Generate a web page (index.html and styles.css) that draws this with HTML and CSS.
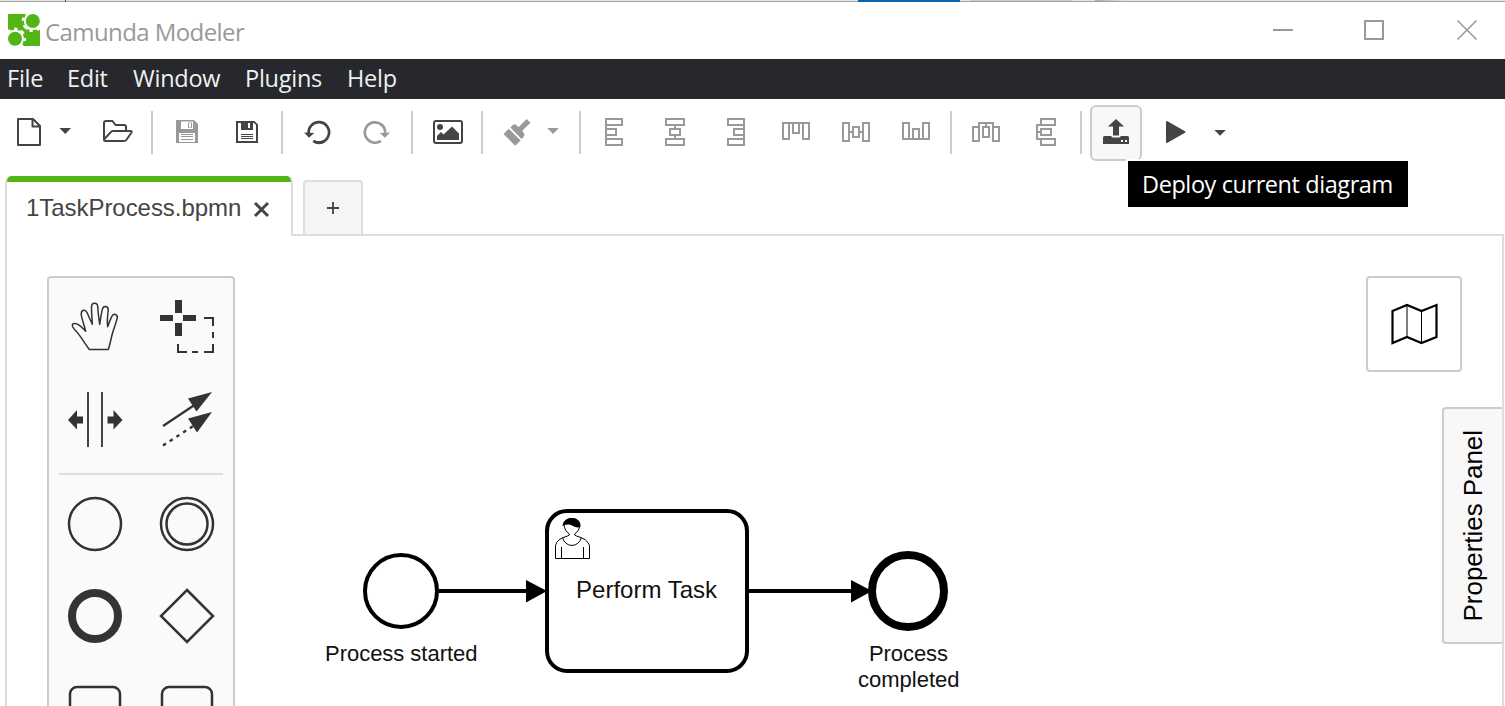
FILE: index.html
```html
<!DOCTYPE html>
<html lang="en">
<head>
<meta charset="utf-8">
<title>Camunda Modeler</title>
<link rel="stylesheet" href="styles.css">
</head>
<body>
<div class="app">
  <div class="backdrop"><i class="mark"></i><i class="blue"></i><i class="grey"></i><i class="shade"></i></div>
  <header class="titlebar">
    <svg class="logo" width="32" height="32" viewBox="8 14 32 32">
      <path fill="#52b415" d="M9 14h31v31a1 1 0 0 1-1 1H8V15a1 1 0 0 1 1-1z"/>
      <path fill="#fff" d="M25.500 14H40v15.500H25.500zM8 30.500h14.500v16H8z"/>
      <g fill="none" stroke="#fff">
        <circle cx="32.8" cy="21" r="8" stroke-width="2"/>
        <circle cx="32.8" cy="21" r="9.800" stroke-width="2.600" stroke-dasharray="3.2 4.5"/>
        <circle cx="15" cy="38.7" r="8" stroke-width="2"/>
        <circle cx="15" cy="38.7" r="9.800" stroke-width="2.600" stroke-dasharray="3.2 4.5" stroke-dashoffset="1"/>
      </g>
      <circle cx="32.8" cy="21" r="7" fill="#52b415"/><circle cx="15" cy="38.7" r="7" fill="#52b415"/>
    </svg>
    <span class="title">Camunda Modeler</span>
    <svg class="winctl" width="196" height="24" viewBox="1272 18 196 24" fill="none" stroke="#999">
      <path stroke-width="2" d="M1273 30h20M1365 21h18v18h-18z"/><path stroke-width="1.6" d="M1457.500 20.500l19 19M1476.500 20.500l-19 19"/>
    </svg>
  </header>
  <nav class="menu"><span class="m1">File</span><span class="m2">Edit</span><span class="m3">Window</span><span class="m4">Plugins</span><span class="m5">Help</span></nav>
  <div class="toolbar">
    <div class="group first">
      <svg class="w34" viewBox="12 116 34 32" fill="none" stroke="#444" stroke-width="2"><path stroke-linejoin="round" d="M18 119h15l7 7v19H18zM32.500 119v7.500H40"/></svg>
      <svg class="w38" viewBox="46 116 38 32"><path fill="#444" d="M59.500 128h11.500l-5.700 6z"/></svg>
      <svg class="w67" viewBox="84 116 67 32" fill="none" stroke="#444" stroke-width="2" stroke-linejoin="round"><path d="M104 139.500V123a2 2 0 0 1 2-2h6.500l3 4H124a2 2 0 0 1 2 2v4M104 139.500a1.500 1.500 0 0 0 1.500 1.500H124q1.500 0 2.300-1l5.200-7.500q.7-1.500-1-1.500h-17.500q-1.500 0-2.500 1.300z"/></svg>
    </div>
    <div class="group">
      <svg class="btn" viewBox="157 116 60 32"><path fill="#999" fill-rule="evenodd" d="M176 120h18l4 4v19h-22zM181 121.500v7.500h12v-7.500zM179 133v9h16v-9z"/><path fill="#999" d="M188 122.500h4v5.500h-4z"/><path fill="#fff" d="M189 123h2v4.500h-2z"/><path stroke="#999" d="M181 134.500h12M181 136.500h12M181 139.500h12"/></svg>
      <svg class="btn" viewBox="217 116 60 32"><path fill="#444" fill-rule="evenodd" d="M236 121h18.500l3.500 3.500V143h-22zM238 123v18h18v-16l-2-2h-1v7h-12v-7z"/><path fill="#444" d="M242 122h9v7h-9z"/><path fill="#fff" d="M248 123h2v5h-2z"/><path stroke="#444" d="M241 134.500h12M241 136.500h12M241 138.500h12"/></svg>
    </div>
    <div class="group">
      <svg class="btn" viewBox="287 116 60 32"><path fill="none" stroke="#444" stroke-width="2.700" d="M308.800 134A10.200 10.200 0 1 1 313 140.700" /><path fill="#fff" d="M308 134l9 3 0 2-4 5-7-3z"/><path fill="none" stroke="#444" stroke-width="2.700" d="M324.500 141.100A10.200 10.200 0 0 1 313.200 140.900"/><path fill="#444" d="M304 132.500l10.200.5-5.200 4.700z"/></svg>
      <svg class="btn" viewBox="347 116 60 32"><path fill="none" stroke="#999" stroke-width="2.700" d="M385.200 133A10.200 10.200 0 1 0 380.800 140.900"/><path fill="#fff" d="M382 136l4-4 2 6-5.500 3.500z"/><path fill="#999" d="M390 132.500l-10.200.5 5.200 4.700z"/></svg>
    </div>
    <div class="group image">
      <svg class="btn" viewBox="418 116 60 32"><rect x="434" y="121" width="28" height="22" rx="2" fill="none" stroke="#444" stroke-width="2"/><circle cx="440" cy="127" r="3" fill="#444"/><path fill="#444" d="M437 140v-4l4-4 2.500 2.500 8.500-8 7 7v6.500z"/></svg>
    </div>
    <div class="group paint">
      <svg class="btn" viewBox="487 116 60 32"><g fill="#999"><path d="M503.500 134l5.300-5.200 11.800 11.700-5.400 5.300z"/><path d="M510.300 127.500l2.500-2.500q2-1.500 3.700.3l1.500 1.500q.7.200 1.300-.3l7.300-7.600 3.900 3.900-7.600 7.300q-.5.700-.3 1.400l1.200 1.500q1.700 1.800 0 3.500l-2.300 2.500z"/></g></svg>
      <svg class="w12" viewBox="547 116 12 32"><path fill="#999" d="M547.300 128h11.500l-5.700 6z"/></svg>
    </div>
    <div class="group aligns">
      <svg class="btn line" viewBox="585 116 60 32"><path d="M606 119h16v6h-16zM606 129h10v6h-10zM606 139h16v6h-16zM606 119v26"/></svg>
      <svg class="btn line" viewBox="645 116 60 32"><path d="M666 119h18v6h-18zM670 129h10v6h-10zM666 139h18v6h-18zM675 125v4M675 135v4"/></svg>
      <svg class="btn line" viewBox="705 116 60 32"><path d="M728 119h16v6h-16zM734 129h10v6h-10zM728 139h16v6h-16zM744 119v26"/></svg>
      <svg class="btn line" viewBox="765 116 60 32"><path d="M783 123h6v16h-6zM793 123h6v10h-6zM803 123h6v16h-6zM783 123h26"/></svg>
      <svg class="btn line" viewBox="825 116 60 32"><path d="M843 123h6v18h-6zM853 127h6v10h-6zM863 123h6v18h-6zM849 132h4M859 132h4"/></svg>
      <svg class="btn line" viewBox="885 116 60 32"><path d="M903 123h6v16h-6zM913 129h6v10h-6zM923 123h6v16h-6zM903 139h26"/></svg>
    </div>
    <div class="group">
      <svg class="btn line" viewBox="956 116 60 32"><path d="M973 127h6v14h-6zM983 127h6v10h-6zM993 127h6v14h-6zM979 127v-4h14v4M986 123v4"/></svg>
      <svg class="btn line" viewBox="1016 116 60 32"><path d="M1041 119h14v6h-14zM1041 129h10v6h-10zM1041 139h14v6h-14zM1041 125h-4v14h4M1037 132h4"/></svg>
    </div>
    <div class="group last">
      <div class="deploy"><svg width="32" height="32" viewBox="1100 117 32 32"><path fill="#444" d="M1116 119l8 7.500h-5v9h-6v-9h-5z"/><path fill="#444" d="M1104.500 136h6.500l1.500 1.500h7l1.500-1.500h6.500q1.500 0 1.500 1.500v6.500h-26v-6.500q0-1.500 1.500-1.500z"/><path fill="#fff" d="M1121 140h2v2h-2zM1125 140h2v2h-2z"/></svg></div>
      <svg class="w68" viewBox="1142 116 68 32"><path fill="#444" stroke="#444" stroke-width="2" stroke-linejoin="round" d="M1167 122v20l17.500-10z"/></svg>
      <svg class="w20" viewBox="1210 116 20 32"><path fill="#444" d="M1214.300 130h11.500l-5.700 5.800z"/></svg>
      <div class="tooltip">Deploy current diagram</div>
    </div>
  </div>
  <div class="tabs">
    <div class="tab"><span class="name">1TaskProcess.bpmn</span><svg width="18" height="18" viewBox="252 200 18 18"><path stroke="#444" stroke-width="2.900" d="M255 203l13 13M268 203l-13 13"/></svg></div>
    <div class="gap"></div>
    <div class="add"><svg width="14" height="14" viewBox="0 0 14 14"><path stroke="#444" stroke-width="1.800" d="M7 1v12M1 7h12"/></svg></div>
    <div class="rest"></div>
  </div>
  <main class="canvas">
    <svg class="diagram" width="1495" height="470" viewBox="7 236 1495 470">
      <g fill="none" stroke="#000" stroke-width="4">
        <circle cx="401" cy="591" r="36"/><rect x="547" y="511" width="200" height="160" rx="20"/>
        <path d="M439 591h90M749 591h104"/><circle cx="908" cy="591" r="36" stroke-width="8"/>
      </g>
      <path d="M526 580v22.500l21-11.500zM851 580v22.500l21-11.500z"/>
      <g fill="#fff" stroke="#000"><path d="M555.500 558.500v-13q1-6.500 12-9.500 2-.5 2-2-5-3-5.500-9.500 1-6 8-6t8 6q-.5 6.500-5.500 9.500 0 1.500 2 2 11 3 13 9.500v13z"/><path fill="none" d="M562.500 537.500q2 7.500 9.500 8 7-.5 9.500-8M561.500 558v-11M583.500 558v-11"/><path fill="#000" stroke="none" d="M562.500 526q1-8 9.500-8 8 .5 8.500 9-4 1.500-8.500-1.500-4-2-9.500.5z"/></g>
      <g class="labels"><text class="task" x="576" y="598" textLength="141">Perform Task</text><text x="325" y="661" textLength="152.500">Process started</text><text x="869" y="661" textLength="79">Process</text><text x="858" y="687" textLength="101.500">completed</text></g>
    </svg>
    <aside class="palette">
      <div class="tools">
        <svg viewBox="49 281 92 92"><path fill="none" stroke="#333" stroke-width="1.500" stroke-linejoin="round" d="M89.300 349.500C83 341 79.500 334 74.500 329.500 71 326 72 323.500 75 323.500c4 0 7 4 10.700 7.800-1-5-4-12-4.500-17 0-4.500 4-5.500 5.700-2 1.500 3.500 3.500 8 5.400 12-.3-6-.8-12-.8-17 0-5 6-5.500 6.300 0 .3 6 1 11 1.900 17 .8-5 1.500-10 2.500-14.500 1-5 6.500-4 6 .5-.5 6-1.500 11-.5 16.400 1.500-4.500 2.500-7 4-10 1.500-4 6.500-2.500 5.500 1.500-1 5-3.500 10-5 16-1.500 5.500-2 10-3.900 15.300z"/></svg>
        <svg viewBox="141 281 92 92"><g fill="#333"><path d="M175 300h7v13h-7zM175 323h7v13h-7zM160 315h13v6h-13zM183 315h13v6h-13z"/></g><path fill="none" stroke="#333" stroke-width="2" d="M204 318h9v8M213 332v6M213 344v8h-9M198 352h-6M187 352h-9v-8"/></svg>
        <svg viewBox="49 373 92 92"><path stroke="#444" stroke-width="2" d="M88 392v55M102 392v55"/><path fill="#333" d="M68 420l9-10v6.500h6v7h-6v6zM122.500 420l-9-10v6.500h-6v7h6v6z"/></svg>
        <svg viewBox="141 373 92 92"><path stroke="#333" stroke-width="2.300" d="M163 426l33-22"/><path stroke="#333" stroke-width="2.400" stroke-dasharray="3.500 4.500" d="M163 445.500l31-20"/><path fill="#333" d="M212 392l-24 6.500 8.500 13zM212 412l-24 6.500 9 14z"/></svg>
      </div>
      <div class="rule"></div>
      <div class="tools">
        <svg viewBox="49 478 92 92" class="shape"><circle cx="95" cy="524" r="26"/></svg>
        <svg viewBox="141 478 92 92" class="shape"><circle cx="187" cy="524" r="26"/><circle cx="187" cy="524" r="20.500"/></svg>
        <svg viewBox="49 570 92 92" class="shape"><circle cx="95" cy="616" r="23" stroke-width="8"/></svg>
        <svg viewBox="141 570 92 92" class="shape"><path d="M187 590l26 26-26 26-26-26z"/></svg>
        <svg viewBox="49 662 92 92" class="shape"><rect x="70" y="687" width="50" height="42" rx="7"/></svg>
        <svg viewBox="141 662 92 92" class="shape"><rect x="162" y="687" width="50" height="42" rx="7"/></svg>
      </div>
    </aside>
    <div class="minimap"><svg width="48" height="44" viewBox="1390 302 48 44" fill="none" stroke="#000"><path stroke-width="2.200" d="M1392.500 311l14.500-6 14.500 6 15-6v32l-15 6-14.500-6-14.500 6z"/><path stroke-width="1" d="M1407 305v32M1421.500 311v32"/></svg></div>
    <div class="properties"><span>Properties Panel</span></div>
  </main>
</div>
</body>
</html>
```

FILE: styles.css
```css
* { box-sizing: border-box; }
body { margin: 0; background: #fff; font-family: "Liberation Sans", Arial, sans-serif; }
svg { display: block; flex: none; }
.app { width: 1505px; height: 706px; display: flex; flex-direction: column; overflow: hidden; }
.backdrop { height: 2px; display: flex; background: linear-gradient(#e4e4e4 50%, #a5a5a5 50%); }
.mark { width: 1px; margin-left: 65px; background: #555; }
.blue { width: 102px; margin-left: 792px; background: #0067b8; }
.grey { width: 102px; height: 1px; margin-left: 10px; background: #ccc; }
.shade { width: 30px; height: 1px; margin-left: 23px; background: linear-gradient(90deg, #aaa, #e4e4e4); }
.titlebar { height: 57px; flex: none; display: flex; padding: 12px 37px 0 8px; }
.title { margin-left: 5px; font: 24px/35px "Open Sans", sans-serif; letter-spacing: -0.58px; color: #999; white-space: nowrap; }
.winctl { width: 196px; height: 24px; margin: 4px 0 0 auto; overflow: visible; }
.menu { height: 40px; flex: none; display: flex; background: #26282d; color: #f0f0f0; font: 23.5px/39px "Open Sans", sans-serif; letter-spacing: -0.25px; padding-left: 7px; }
.menu span { white-space: nowrap; flex: none; }
.m1 { width: 60px; } .m2 { width: 66px; } .m3 { width: 112px; } .m4 { width: 102px; }
.toolbar { height: 77px; flex: none; display: flex; padding-top: 6px; }
.group { display: flex; align-items: center; height: 43px; margin-top: 6px; padding: 0 4px; border-right: 2px solid #ccc; }
.group svg { height: 32px; margin-top: -1px; }
.first { padding: 0 0 0 12px; }
.image { padding: 0; width: 70px; }
.image .btn { margin-left: 5px; }
.paint { width: 98px; }
.aligns { width: 371px; }
.last { border: 0; padding: 0 0 0 8px; position: relative; }
.btn { width: 60px; } .w34 { width: 34px; } .w38 { width: 38px; } .w67 { width: 67px; } .w12 { width: 12px; } .w68 { width: 68px; } .w20 { width: 20px; }
.line { fill: none; stroke: #999; stroke-width: 2; }
.deploy { width: 52px; height: 56px; border: 2px solid #ccc; border-radius: 6px; background: #f8f8f8; display: flex; align-items: center; justify-content: center; }
.deploy svg { margin-top: 0; }
.tooltip { position: absolute; left: 46px; top: 50px; width: 280px; height: 46px; background: #000; color: #fff; font: 23.5px/46px "Open Sans", sans-serif; letter-spacing: -0.42px; padding-left: 14px; white-space: nowrap; box-shadow: -2px -2px #fff; z-index: 3; }
.tabs { height: 60px; flex: none; display: flex; padding: 0 1px 0 5px; }
.tab { width: 288px; flex: none; border: solid #ddd; border-width: 0 2px 0 2px; border-radius: 6px 6px 0 0; display: flex; align-items: center; padding: 4px 0 0 19px; color: #444; background: linear-gradient(#52b415 6px, transparent 6px); background-origin: border-box; }
.name { font-size: 24px; letter-spacing: -0.05px; width: 226px; white-space: nowrap; }
.tab svg { margin-top: 1px; }
.gap { width: 10px; border-bottom: 2px solid #ddd; }
.add { width: 60px; margin-top: 4px; border: 2px solid #ddd; border-radius: 4px 4px 0 0; background: #f5f5f5; display: flex; align-items: center; justify-content: center; }
.rest { flex: 1; border-bottom: 2px solid #ddd; }
.canvas { position: relative; flex: 1; margin: 0 1px 0 5px; border: solid #ddd; border-width: 0 2px; overflow: hidden; }
.labels { font-size: 22px; fill: #111; }
.labels .task { font-size: 24px; }
.palette { position: absolute; left: 40px; top: 40px; width: 188px; height: 480px; border: 2px solid #ccc; border-radius: 4px; background: #fafafa; padding-top: 3px; }
.tools { display: grid; grid-template-columns: 92px 92px; }
.tools svg { width: 92px; height: 92px; }
.rule { height: 2px; margin: 8px 10px 3px; background: #ddd; }
.shape { fill: none; stroke: #333; stroke-width: 2.500; }
.minimap { position: absolute; left: 1359px; top: 40px; width: 96px; height: 96px; border: 2px solid #ccc; border-radius: 4px; display: flex; align-items: center; justify-content: center; background: #fff; }
.properties { position: absolute; right: 0; top: 171px; width: 60px; height: 237px; border: 2px solid #ccc; border-right: 0; border-radius: 4px 0 0 4px; background: #f8f8f8; display: flex; align-items: center; justify-content: center; }
.properties span { writing-mode: vertical-rl; transform: rotate(180deg); font-size: 26px; letter-spacing: -0.05px; line-height: 30px; white-space: nowrap; }
```
